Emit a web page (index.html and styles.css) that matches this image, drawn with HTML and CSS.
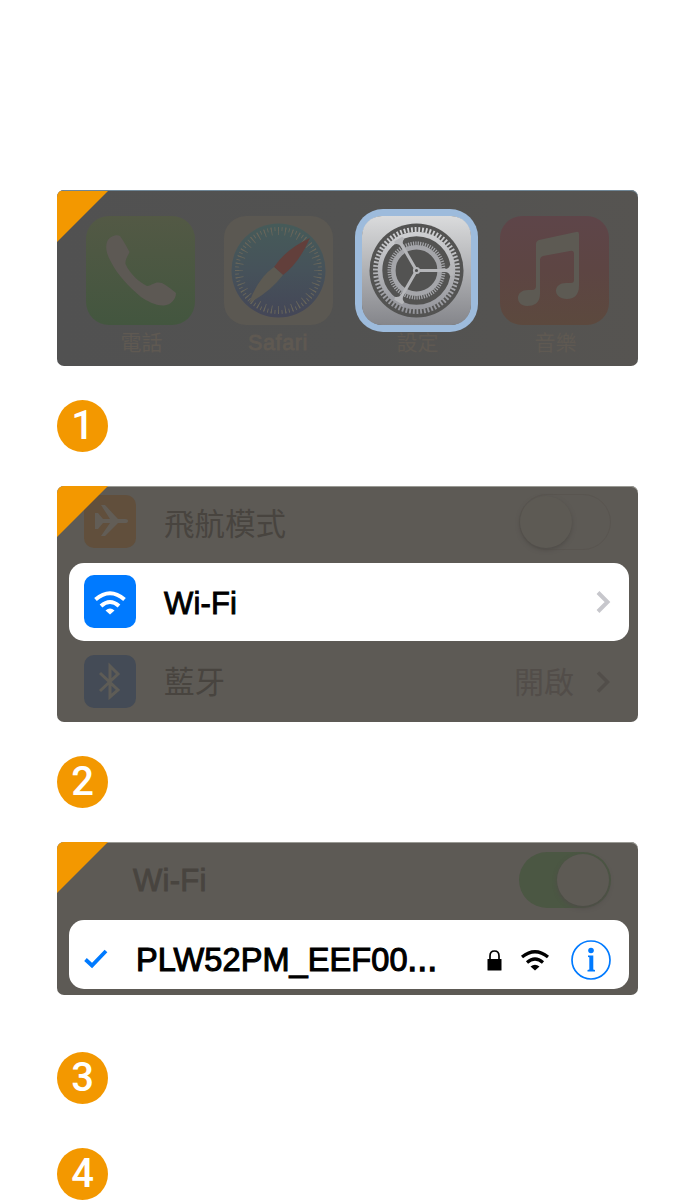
FILE: index.html
```html
<!DOCTYPE html>
<html lang="zh-Hant">
<head>
<meta charset="utf-8">
<title>Wi-Fi</title>
<link rel="stylesheet" href="styles.css">
</head>
<body>
<main class="guide">
  <section class="panel home">
    <div class="app">
      <svg class="icon" viewBox="0 0 109 109">
        <defs><linearGradient id="phone" x2="0" y2="1"><stop stop-color="#535945"/><stop offset="1" stop-color="#43563f"/></linearGradient></defs>
        <rect width="109" height="109" rx="23" fill="url(#phone)"/>
        <path d="M21 26C23 20 31 18 34 20C37 24 41 31 43.500 36C42 40 39 43 39.500 48C44 58 53 66 61 70C67 69 69 65 76 67C82 70 86 74 90 77C90 83 85 89 78 89.500C70 90 61 85 55 81C43 71 31 58 25 46C21 39 19 32 21 26Z" fill="#5d5954"/>
      </svg>
      <span class="label">電話</span>
    </div>
    <div class="app">
      <svg class="icon" viewBox="0 0 109 109">
        <defs><linearGradient id="compass" x2="0" y2="1"><stop stop-color="#465b59"/><stop offset=".5" stop-color="#46525a"/><stop offset="1" stop-color="#444657"/></linearGradient></defs>
        <rect width="109" height="109" rx="22" fill="#5b5852"/>
        <circle cx="54.500" cy="54.500" r="47" fill="url(#compass)"/>
        <g fill="none" stroke="#68665b"><circle cx="54.500" cy="54.500" r="41.500" stroke-width="4" pathLength="144" stroke-dasharray=".5 1.500" stroke-dashoffset=".25"/><circle cx="54.500" cy="54.500" r="39.500" stroke-width="8" pathLength="144" stroke-dasharray=".5 3.500" stroke-dashoffset=".25"/></g>
        <path d="M86 22Q62 33 50 51L59 59Q75 47 86 22Z" fill="#623f3b"/>
        <path d="M25 87Q34 62 50 51L59 59Q46 76 25 87Z" fill="#5d5a52"/>
      </svg>
      <span class="label latin">Safari</span>
    </div>
    <div class="app selected">
      <svg class="icon" viewBox="0 0 109 109">
        <defs>
          <linearGradient id="silver" x2="0" y2="1"><stop stop-color="#dadbdc"/><stop offset="1" stop-color="#85868b"/></linearGradient>
          <linearGradient id="metal" gradientUnits="userSpaceOnUse" x1="0" y1="10" x2="0" y2="99"><stop stop-color="#d4d5d7"/><stop offset="1" stop-color="#929399"/></linearGradient>
        </defs>
        <rect width="109" height="109" rx="20" fill="url(#silver)"/>
        <circle cx="54.500" cy="54.500" r="47" fill="#535352"/>
        <g fill="none" stroke="url(#metal)">
          <circle cx="54.500" cy="54.500" r="36.500" stroke-width="4.600"/>
          <circle cx="54.500" cy="54.500" r="41" stroke-width="5" pathLength="140" stroke-dasharray="1 1"/>
        </g>
        <g fill="none" stroke="#a5a6aa">
          <circle cx="54.500" cy="54.500" r="23.200" stroke-width="4.600"/>
          <circle cx="54.500" cy="54.500" r="27" stroke-width="4" pathLength="140" stroke-dasharray="1 1"/>
        </g>
        <g fill="#b5b6b9">
          <path id="spoke" d="M55 53H83Q87 53 88 49L91 50V59L88 60Q87 56 83 56H55Z"/>
          <use href="#spoke" transform="rotate(120 54.500 54.500)"/>
          <use href="#spoke" transform="rotate(240 54.500 54.500)"/>
        </g>
        <circle cx="54.500" cy="54.500" r="2.600" fill="#505050" stroke="#b5b6b9" stroke-width="2"/>
      </svg>
      <span class="label">設定</span>
    </div>
    <div class="app">
      <svg class="icon" viewBox="0 0 109 109">
        <defs><linearGradient id="music" x2="0" y2="1"><stop stop-color="#5e4549"/><stop offset=".5" stop-color="#5d4543"/><stop offset="1" stop-color="#5c493e"/></linearGradient></defs>
        <rect width="109" height="109" rx="22" fill="url(#music)"/>
        <path d="M36 28Q36 25 39 24L76 16Q79 15 79 18V70C79 79 74 83 67 83C60 83 56 79 56 75C56 70 60 67 66 67H71Q74 67 74 64V38Q74 34 70 35L43 40Q40 41 40 44V78C40 87 34 90 27 90C21 90 18 86 18 82C18 77 22 74 28 74H32Q36 74 36 70Z" fill="#5d5a53"/>
      </svg>
      <span class="label">音樂</span>
    </div>
  </section>
  <div class="step">1</div>

  <section class="panel settings">
    <div class="row air">
      <svg class="tile" viewBox="0 0 52 53"><rect width="52" height="53" rx="10" fill="#614f3c"/><path d="M11 18H14L19 24H26L17 10H21L34 24H41Q44 24 44 26Q44 28 41 28H34L21 41H17L26 28H19L14 34H11Z" fill="#625d56"/></svg>
      <span class="name">飛航模式</span>
      <span class="switch off"><i></i></span>
    </div>
    <div class="row highlight">
      <svg class="tile" viewBox="0 0 52 53"><rect width="52" height="53" rx="10" fill="#007aff"/><g fill="none" stroke="#fff" stroke-width="4"><path d="M11.500 24.500Q26 12 40.500 24.500"/><path d="M17 31Q26 23 35 31"/></g><path d="M21.500 35.500Q26 31.500 30.500 35.500L26 39.500Z" fill="#fff"/></svg>
      <span class="name strong">Wi-Fi</span>
      <svg class="chevron" viewBox="0 0 14 22"><path d="M2 1.500L11.500 11L2 20.500" fill="none" stroke="#c7c7cc" stroke-width="4"/></svg>
    </div>
    <div class="row blue">
      <svg class="tile" viewBox="0 0 52 53"><rect width="52" height="53" rx="10" fill="#444b56"/><path d="M16 18L34 35L26 42V11L34 19L16 36" fill="none" stroke="#5e5c56" stroke-width="3"/></svg>
      <span class="name">藍牙</span>
      <span class="state">開啟</span>
      <svg class="chevron" viewBox="0 0 14 22"><path d="M2 1.500L11.500 11L2 20.500" fill="none" stroke="#524e4a" stroke-width="3.500"/></svg>
    </div>
  </section>
  <div class="step">2</div>

  <section class="panel network">
    <div class="row wifi-head"><span class="name latin">Wi-Fi</span><span class="switch on"><i></i></span></div>
    <div class="row highlight ssid">
      <svg class="check" viewBox="0 0 24 20"><path d="M1.500 10.500L8 16.500L22 2" fill="none" stroke="#007aff" stroke-width="3.800"/></svg>
      <span class="network-name">PLW52PM_EEF00<span class="dots">...</span></span>
      <svg class="lock" viewBox="0 0 15 21"><path d="M3 10V6Q3 1 7.500 1T12 6V10" fill="none" stroke="#000" stroke-width="1.700"/><rect x=".5" y="9" width="14" height="11.500" rx=".5"/></svg>
      <svg class="signal" viewBox="0 0 28 21"><g fill="none" stroke="#000" stroke-width="3.200"><path d="M1 7Q14 -3.500 27 7"/><path d="M6 12.500Q14 5.500 22 12.500"/></g><path d="M9.500 16.500Q14 13 18.500 16.500L14 20.500Z"/></svg>
      <svg class="info" viewBox="0 0 40 40"><g fill="#007aff"><circle cx="20" cy="20" r="19" fill="none" stroke="#007aff" stroke-width="1.700"/><circle cx="20" cy="10.500" r="2.800"/><path d="M17 15.500H22.300V29.500L24 30V31.500H16.500V30L18.300 29.500V17.200L17 17Z"/></g></svg>
    </div>
  </section>
  <div class="step">3</div>
  <div class="step">4</div>
</main>
</body>
</html>
```
FILE: styles.css
```css
* { box-sizing: border-box; }
body { margin: 0; background: #fff; font-family: "Liberation Sans", "Noto Sans CJK TC", sans-serif; }
svg { display: block; flex: none; overflow: visible; }
.guide { height: 1200px; overflow: hidden; padding: 190px 60px 0 57px; }
.panel { position: relative; width: 581px; overflow: hidden; border-radius: 7px; background: #5d5a55; box-shadow: inset 0 1px #9a9a94; }
.panel::before { content: ""; position: absolute; z-index: 2; top: 0; left: 0; width: 51px; height: 51px; background: #f39800; clip-path: polygon(0 0, 100% 0, 0 100%); }
.home { display: flex; gap: 29px; height: 176px; padding: 26px 0 0 28.500px; background: linear-gradient(90deg, #515151, #525251 50%, #565451); box-shadow: inset 0 1px #708797; }
.home::before { top: 1px; }
.app { width: 109px; }
.icon { width: 109px; height: 109px; }
.selected .icon { border-radius: 21px; box-shadow: 0 0 0 7px #9dbbdc; }
.label { display: block; margin-top: 4px; font-size: 21px; line-height: 28px; text-align: center; padding-left: 3px; color: #5f5952; }
.label.latin { padding-left: 0; font-size: 21.500px; letter-spacing: .6px; -webkit-text-stroke: .9px #5f5952; }
.step { display: grid; place-items: center; width: 51px; height: 52px; border-radius: 50%; background: #f39800; color: #fff; font: 500 40px/52px Roboto, sans-serif; }
.home + .step { margin: 34px 0; }
.settings + .step { margin: 34px 0; }
.network + .step { margin: 57px 0 44px; }
.settings { height: 236px; }
.row { display: flex; align-items: center; }
.tile { width: 52px; height: 53px; }
.name { margin-left: 28px; font-size: 30.500px; color: #48443f; white-space: nowrap; }
.air { height: 77px; padding: 0 27px 6px 27px; }
.highlight { width: 560px; height: 78px; margin-left: 12px; padding: 0 19px 0 15px; border-radius: 15px; background: #fff; }
.highlight .tile { margin-bottom: 2px; }
.strong { margin-top: 3px; color: #000; font-size: 31px; letter-spacing: .15px; -webkit-text-stroke: .9px #000; }
.chevron { width: 14px; height: 22px; margin-left: auto; }
.blue { height: 81px; padding: 0 28px 0 27px; }
.blue .name, .state { margin-top: -3px; }
.state { margin-left: auto; color: #524d49; font-size: 30px; }
.state + .chevron { margin-left: 22px; }
.switch { display: flex; flex: none; width: 92px; height: 56px; margin-left: auto; border-radius: 28px; padding: 2px; }
.switch i { display: block; width: 52px; height: 52px; border-radius: 50%; background: #5d5a54; box-shadow: 0 2px 4px #4f4c48; }
.off { border: 1px solid #595550; padding: 1px 0; }
.on { justify-content: flex-end; background: #4b5743; }
.network { height: 153px; }
.wifi-head { height: 78px; padding: 0 27px 2px 48px; }
.latin { -webkit-text-stroke: .9px #48443f; }
.wifi-head .name { margin-top: 2px; font-size: 31px; letter-spacing: .25px; }
.ssid { height: 69px; padding: 0 18px 0 15px; }
.check { width: 24px; height: 20px; margin-top: 9px; }
.network-name { width: 303px; margin: 11px 0 0 28px; font-size: 32.500px; letter-spacing: .1px; line-height: 69px; -webkit-text-stroke: 1.100px #000; white-space: nowrap; }
.dots { letter-spacing: 1px; -webkit-text-stroke: 1.600px #000; }
.lock { width: 15px; height: 21px; margin: 11px 0 0 48px; }
.signal { width: 28px; height: 21px; margin: 11px 0 0 19px; }
.info { width: 40px; height: 40px; margin: 11px 0 0 auto; }
```
